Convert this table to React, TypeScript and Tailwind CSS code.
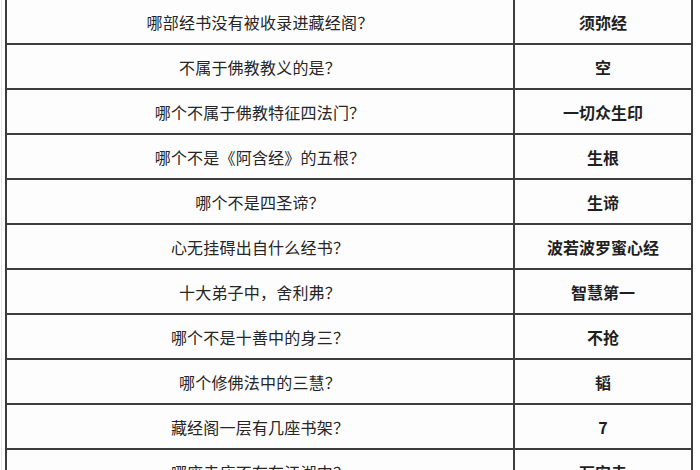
const rows: [string, string][] = [
  ["哪部经书没有被收录进藏经阁？", "须弥经"],
  ["不属于佛教教义的是？", "空"],
  ["哪个不属于佛教特征四法门？", "一切众生印"],
  ["哪个不是《阿含经》的五根？", "生根"],
  ["哪个不是四圣谛？", "生谛"],
  ["心无挂碍出自什么经书？", "波若波罗蜜心经"],
  ["十大弟子中，舍利弗？", "智慧第一"],
  ["哪个不是十善中的身三？", "不抢"],
  ["哪个修佛法中的三慧？", "韬"],
  ["藏经阁一层有几座书架？", "7"],
  ["哪座寺庙不存在江湖中？", "万安寺"],
];

export default function App() {
  return (
    <div
      className="w-[700px] h-[470px] overflow-hidden bg-white pl-px"
      style={{ fontFamily: '"Noto Sans CJK SC", "Noto Sans", sans-serif' }}
    >
      <div className="h-full border-l border-[#e4e4e4] pl-[3px]">
        <div className="w-[688px] border-x-2 border-[#3d3d3d] bg-[#fdfdfd]">
          {rows.map(([q, a], i) => (
            <div key={i} className="flex h-[45px] border-b-2 border-[#3d3d3d]">
              <div className="w-[506px] flex items-center justify-center text-[16px] tracking-[0.2px] text-[#262626]">
                {q}
              </div>
              <div className="w-[178px] border-l-2 border-[#3d3d3d] flex items-center justify-center text-[16px] font-bold text-[#1f1f1f]">
                {a}
              </div>
            </div>
          ))}
        </div>
      </div>
    </div>
  );
}
